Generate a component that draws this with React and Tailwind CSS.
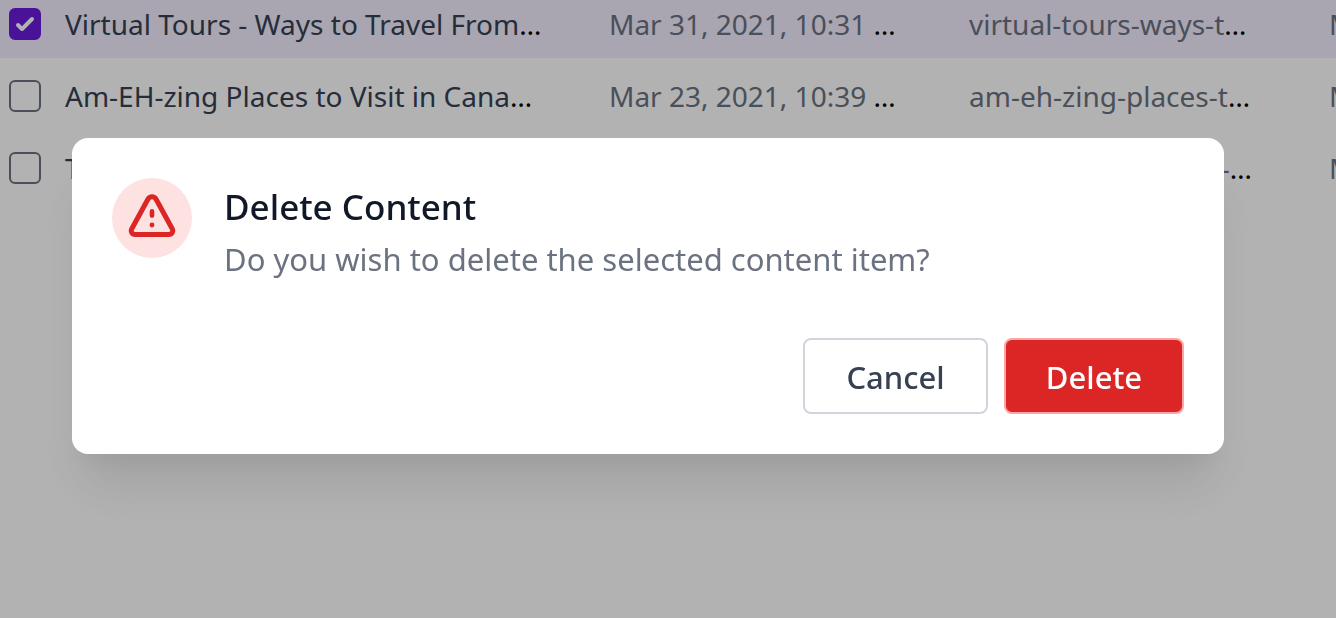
import React from 'react';

const rows = [
  {
    id: 1,
    title: 'Virtual Tours - Ways to Travel From',
    date: 'Mar 31, 2021, 10:31 ',
    slug: 'virtual-tours-ways-t',
    type: 'Multi',
    selected: true,
  },
  {
    id: 2,
    title: 'Am-EH-zing Places to Visit in Cana',
    date: 'Mar 23, 2021, 10:39 ',
    slug: 'am-eh-zing-places-t',
    type: 'Multi',
    selected: false,
  },
  {
    id: 3,
    title: 'Top Places for Trips This Summ',
    date: 'Mar 22, 2021, 10:12 ',
    slug: 'top-places-for-trips-',
    type: 'Multi',
    selected: false,
  },
];

const AlertIcon = () => (
  <svg
    className="w-12 h-12"
    viewBox="0 0 48 48"
    fill="none"
    stroke="currentColor"
    strokeLinecap="round"
    strokeLinejoin="round"
    aria-hidden="true"
  >
    <path
      d="M19.9 5.2 3.8 34.7C2.3 37.6 4 40.4 7.2 40.4h33.6c3.2 0 4.9-2.8 3.4-5.7L28.1 5.2c-1.9-3.3-6.3-3.3-8.2 0Z"
      strokeWidth="5"
    />
    <path d="M24 17.4v4.2" strokeWidth="4.6" />
    <circle cx="24" cy="31" r="2.4" fill="currentColor" stroke="none" />
  </svg>
);

const Checkbox = ({ checked, label }) => (
  <label className="grid w-8 h-8">
    <input
      type="checkbox"
      defaultChecked={checked}
      aria-label={label}
      className="peer col-start-1 row-start-1 w-8 h-8 appearance-none rounded-md border-2 border-gray-500 checked:border-[#6b1bdb] checked:bg-[#6b1bdb]"
    />
    <svg
      className="col-start-1 row-start-1 w-8 h-8 pointer-events-none opacity-0 peer-checked:opacity-100"
      viewBox="0 0 16 16"
      fill="white"
    >
      <path d="M12.207 4.793a1 1 0 0 1 0 1.414l-5 5a1 1 0 0 1-1.414 0l-2-2a1 1 0 0 1 1.414-1.414L6.5 9.086l4.293-4.293a1 1 0 0 1 1.414 0z" />
    </svg>
  </label>
);

const TextCell = ({ children, className }) => (
  <td className="p-0 pt-1 whitespace-nowrap text-black">
    <span className={className}>{children}</span>…
  </td>
);

const ContentTable = () => (
  <table className="-mt-3.5 w-full min-w-[1400px] table-fixed border-collapse text-[28px]">
    <colgroup>
      <col className="w-[65px]" />
      <col className="w-[544px]" />
      <col className="w-[360px]" />
      <col className="w-[360px]" />
      <col />
    </colgroup>
    <tbody>
      {rows.map((row) => (
        <tr key={row.id} className={row.selected ? 'h-18 bg-[#f3edfe]' : 'h-18 bg-white'}>
          <td className="p-0 pl-[9px] pt-1">
            <Checkbox checked={row.selected} label={row.title} />
          </td>
          <TextCell className="text-gray-700">{row.title}</TextCell>
          <TextCell className="text-gray-500">{row.date}</TextCell>
          <TextCell className="text-gray-500">{row.slug}</TextCell>
          <TextCell className="text-gray-500">{row.type}</TextCell>
        </tr>
      ))}
    </tbody>
  </table>
);

const DeleteDialog = () => (
  <div
    role="dialog"
    aria-modal="true"
    aria-labelledby="dialog-title"
    className="w-full rounded-2xl bg-white p-10 shadow-[0_40px_50px_-10px_rgba(0,0,0,0.1),0_20px_20px_-10px_rgba(0,0,0,0.04)]"
  >
    <div className="flex items-start gap-8">
      <div className="flex w-20 h-20 shrink-0 items-center justify-center rounded-full bg-[#fee2e2] text-[#dc2626]">
        <AlertIcon />
      </div>
      <div className="pt-[5px]">
        <h3 id="dialog-title" className="text-[35px] leading-12 font-medium text-[#111827]">
          Delete Content
        </h3>
        <p className="mt-1 text-[31px] leading-12 text-[#6b7280]">
          Do you wish to delete the selected content item?
        </p>
      </div>
    </div>
    <div className="mt-[55px] flex justify-end gap-4">
      <button
        type="button"
        className="h-19 w-[185px] rounded-lg border-2 border-[#d1d5db] bg-white pt-0.5 text-[31px] leading-12 font-medium text-[#374151]"
      >
        Cancel
      </button>
      <button
        type="button"
        className="h-19 w-[180px] rounded-lg border-2 border-[#fca5a5] bg-[#dc2626] pt-0.5 text-[31px] leading-12 font-medium text-white"
      >
        Delete
      </button>
    </div>
  </div>
);

const App = () => (
  <div className="relative min-h-screen overflow-hidden bg-white font-['Noto_Sans',sans-serif]">
    <ContentTable />
    <div className="fixed inset-0 flex items-start bg-black/30 pt-[138px] pl-18 pr-28">
      <DeleteDialog />
    </div>
  </div>
);

export default App;
